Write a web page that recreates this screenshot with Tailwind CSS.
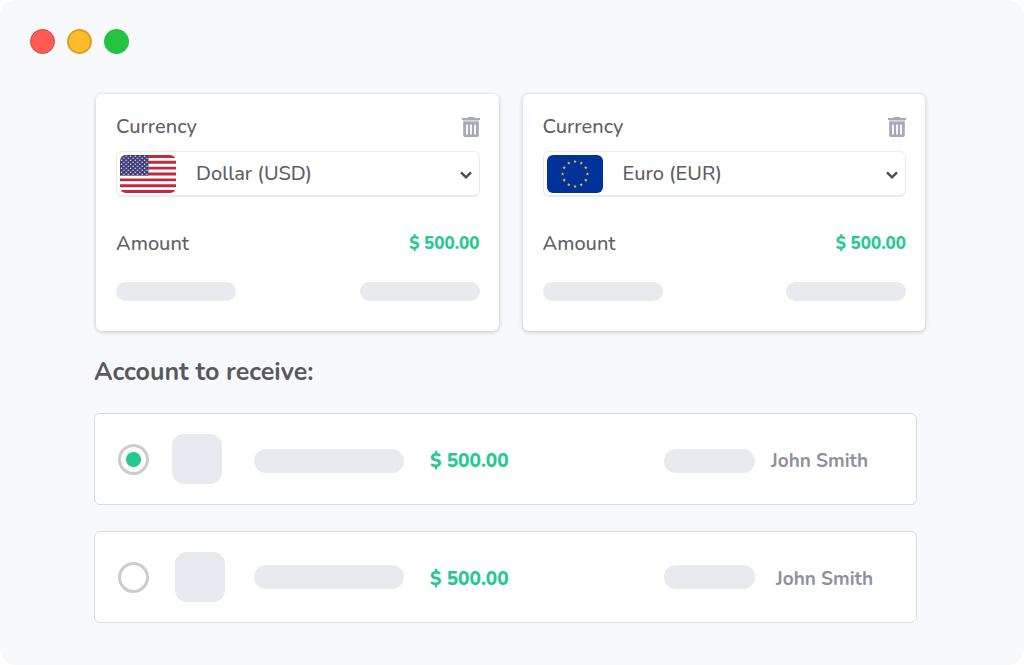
<!DOCTYPE html>
<html lang="en">
<head>
    <meta charset="UTF-8">
    <meta name="viewport" content="width=device-width, initial-scale=1.0">
    <title>Currency accounts</title>
    <script src="https://cdn.jsdelivr.net/npm/@tailwindcss/browser@4"></script>
</head>
<body class="bg-white font-['Nunito','Lato',sans-serif] text-[#5f6065]">
    <!-- Shared icons -->
    <svg class="hidden">
        <symbol id="trash" viewBox="0 0 18 20">
            <path fill="#a8a9b9" d="M6 0h6l.6 1H18v2H0V1h5.400z"/>
            <path fill="#d2d3dc" d="M1 3h16v1.600H1z"/>
            <path fill="#a8a9b9" d="M1.200 4.600h15.600V18a2 2 0 0 1-2 2H3.200a2 2 0 0 1-2-2z"/>
            <path stroke="#fff" stroke-width="1.800" d="M5 7.500v10M9 7.500v10M13 7.500v10"/>
        </symbol>
        <symbol id="chevron" viewBox="0 0 12 8">
            <path fill="none" stroke="#4b4c50" stroke-width="2.400" d="M1 1.300l5 5 5-5"/>
        </symbol>
        <path id="star" d="M0-1.900L.5-.6 1.800-.6.75.25 1.100 1.550 0 .8-1.100 1.550-.75.25-1.800-.6-.5-.6z"/>
    </svg>

    <main class="min-h-screen rounded-2xl bg-[#f8f9fd] pb-10">
        <!-- Window controls -->
        <div class="flex gap-3 pl-[30px] pt-[29px]">
            <span class="size-[25px] rounded-full border border-[#e2463f] bg-[#fb5a55]"></span>
            <span class="size-[25px] rounded-full border-2 border-[#dfa023] bg-[#ffbd2e]"></span>
            <span class="size-[25px] rounded-full bg-[#26c340]"></span>
        </div>

        <!-- Currency cards -->
        <section class="ml-24 mr-[99px] mt-10 grid grid-cols-2 gap-6">
            <div class="rounded-md bg-white pb-[30px] pl-5 pr-[19px] pt-[21px] shadow-[0_1px_4px_rgba(0,0,0,0.22)]">
                <div class="flex h-6 items-center justify-between">
                    <label for="currency1" class="text-xl font-medium leading-6">Currency</label>
                    <button aria-label="Remove dollar"><svg class="h-5 w-[18px]"><use href="#trash"/></svg></button>
                </div>
                <div class="relative mt-3">
                    <select id="currency1" class="h-[46px] w-full appearance-none rounded-md border border-b-2 border-[#eaebf0] bg-white pl-[79px] text-xl font-medium">
                        <option>Dollar (USD)</option>
                        <option>Euro (EUR)</option>
                    </select>
                    <svg class="pointer-events-none absolute left-1 top-1 h-[38px] w-14 rounded-md" viewBox="0 0 56 38" preserveAspectRatio="none">
                        <defs>
                            <pattern id="stars" width="4.600" height="4" patternUnits="userSpaceOnUse">
                                <circle cx="1.500" cy="1.200" r=".7" fill="#fff"/>
                                <circle cx="3.800" cy="3.200" r=".7" fill="#fff"/>
                            </pattern>
                        </defs>
                        <rect width="56" height="38" fill="#fff"/>
                        <path stroke="#bf2a3f" stroke-width="2.920" d="M0 1.460h56M0 7.310h56M0 13.150h56M0 19h56M0 24.850h56M0 30.690h56M0 36.540h56"/>
                        <rect width="28.500" height="20.460" fill="#3c3b78"/>
                        <rect width="28.500" height="20.460" fill="url(#stars)"/>
                    </svg>
                    <svg class="pointer-events-none absolute right-2 top-5 h-2 w-3"><use href="#chevron"/></svg>
                </div>
                <div class="mt-[35px] flex items-center justify-between">
                    <span class="text-xl font-medium leading-6">Amount</span>
                    <span class="text-[17px] font-extrabold leading-6 text-[#23c98f]">$ 500.00</span>
                </div>
                <div class="mt-[26px] flex justify-between">
                    <span class="h-[19px] w-[120px] rounded-full bg-[#e9eaf0]"></span>
                    <span class="h-[19px] w-[120px] rounded-full bg-[#e9eaf0]"></span>
                </div>
            </div>

            <div class="rounded-md bg-white pb-[30px] pl-5 pr-[19px] pt-[21px] shadow-[0_1px_4px_rgba(0,0,0,0.22)]">
                <div class="flex h-6 items-center justify-between">
                    <label for="currency2" class="text-xl font-medium leading-6">Currency</label>
                    <button aria-label="Remove euro"><svg class="h-5 w-[18px]"><use href="#trash"/></svg></button>
                </div>
                <div class="relative mt-3">
                    <select id="currency2" class="h-[46px] w-full appearance-none rounded-md border border-b-2 border-[#eaebf0] bg-white pl-[79px] text-xl font-medium">
                        <option>Euro (EUR)</option>
                        <option>Dollar (USD)</option>
                    </select>
                    <svg class="pointer-events-none absolute left-1 top-1 h-[38px] w-14 rounded-md" viewBox="0 0 56 38">
                        <rect width="56" height="38" fill="#039"/>
                        <g fill="#f5b81f">
                            <use href="#star" x="28" y="6.500"/>
                            <use href="#star" x="34.200" y="8.200"/>
                            <use href="#star" x="38.800" y="12.700"/>
                            <use href="#star" x="40.400" y="19"/>
                            <use href="#star" x="38.800" y="25.200"/>
                            <use href="#star" x="34.200" y="29.700"/>
                            <use href="#star" x="28" y="31.400"/>
                            <use href="#star" x="21.800" y="29.700"/>
                            <use href="#star" x="17.200" y="25.200"/>
                            <use href="#star" x="15.600" y="19"/>
                            <use href="#star" x="17.200" y="12.700"/>
                            <use href="#star" x="21.800" y="8.200"/>
                        </g>
                    </svg>
                    <svg class="pointer-events-none absolute right-2 top-5 h-2 w-3"><use href="#chevron"/></svg>
                </div>
                <div class="mt-[35px] flex items-center justify-between">
                    <span class="text-xl font-medium leading-6">Amount</span>
                    <span class="text-[17px] font-extrabold leading-6 text-[#23c98f]">$ 500.00</span>
                </div>
                <div class="mt-[26px] flex justify-between">
                    <span class="h-[19px] w-[120px] rounded-full bg-[#e9eaf0]"></span>
                    <span class="h-[19px] w-[120px] rounded-full bg-[#e9eaf0]"></span>
                </div>
            </div>
        </section>

        <!-- Accounts -->
        <section class="ml-[94px] mr-[107px] mt-[25px]">
            <h2 class="text-[25px] font-bold leading-8 text-[#58595c]">Account to receive:</h2>
            <div class="mt-[25px] space-y-[26px]">
                <label class="flex h-[92px] items-center rounded-md border border-[#d9dadd] bg-white pl-[23px]">
                    <input type="radio" name="account" checked class="size-[31px] shrink-0 appearance-none rounded-full border-3 border-[#cbccce] bg-white bg-[radial-gradient(circle,#23c98f_7px,transparent_8px)]">
                    <span class="ml-[23px] size-[50px] shrink-0 rounded-xl bg-[#e9eaf0]"></span>
                    <span class="ml-8 mt-1 h-6 w-[150px] rounded-full bg-[#e9eaf0]"></span>
                    <span class="ml-[26px] pt-1 text-[19px] font-extrabold text-[#23c98f]">$ 500.00</span>
                    <span class="ml-auto mt-1 h-6 w-[91px] rounded-full bg-[#e9eaf0]"></span>
                    <span class="ml-4 w-[145px] pt-1 text-[19px] font-bold text-[#9091a0]">John Smith</span>
                </label>
                <label class="flex h-[92px] items-center rounded-md border border-[#d9dadd] bg-white pl-[23px]">
                    <input type="radio" name="account" class="size-[31px] shrink-0 appearance-none rounded-full border-3 border-[#cbccce] bg-white">
                    <span class="ml-[26px] size-[50px] shrink-0 rounded-xl bg-[#e9eaf0]"></span>
                    <span class="ml-[29px] h-6 w-[150px] rounded-full bg-[#e9eaf0]"></span>
                    <span class="ml-[26px] pt-1 text-[19px] font-extrabold text-[#23c98f]">$ 500.00</span>
                    <span class="ml-auto h-6 w-[91px] rounded-full bg-[#e9eaf0]"></span>
                    <span class="ml-4 w-[145px] pl-[5px] pt-1 text-[19px] font-bold text-[#9091a0]">John Smith</span>
                </label>
            </div>
        </section>
    </main>
</body>
</html>
